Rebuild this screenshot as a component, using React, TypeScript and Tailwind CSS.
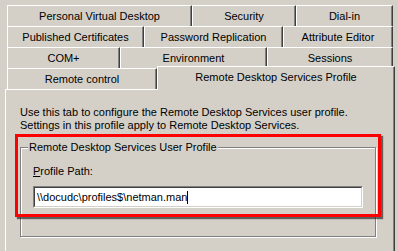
import React from "react";

type Tab = { label: string; w: string };

// tab strip rows, back to front
const TAB_ROWS: Tab[][] = [
  [
    { label: "Personal Virtual Desktop", w: "w-[185px]" },
    { label: "Security", w: "w-[104px]" },
    { label: "Dial-in", w: "w-[97px]" },
  ],
  [
    { label: "Published Certificates", w: "w-[137px]" },
    { label: "Password Replication", w: "w-[139px]" },
    { label: "Attribute Editor", w: "w-[110px]" },
  ],
  [
    { label: "COM+", w: "w-[113px]" },
    { label: "Environment", w: "w-[147px]" },
    { label: "Sessions", w: "w-[126px]" },
  ],
];

const font = "font-['Liberation_Sans',Arial,sans-serif] text-[11px] leading-[13px]";

function TabButton({ label, w }: Tab) {
  return (
    <div
      className={`${w} h-[21px] shrink-0 flex items-center justify-center border-t border-l border-r border-t-white border-l-white border-r-[#404040] shadow-[inset_-1px_0_0_#808080] text-black`}
    >
      {label}
    </div>
  );
}

function TabStrip() {
  return (
    <div className="ml-[2px] w-[386px] flex flex-col">
      {TAB_ROWS.map((row, i) => (
        <div key={i} className="flex h-[21px]">
          {row.map((t) => (
            <TabButton key={t.label} label={t.label} w={t.w} />
          ))}
        </div>
      ))}
      <div className="flex h-[21px]">
        <TabButton label="Remote control" w="w-[150px]" />
        <div className="relative z-10 -mt-[2px] -mr-[2px] w-[238px] h-[24px] shrink-0 flex items-start pt-[4px] justify-center bg-[#d4d0c8] border-t border-l border-r border-t-white border-l-white border-r-[#404040] shadow-[inset_-1px_0_0_#808080] text-black">
          Remote Desktop Services Profile
        </div>
      </div>
    </div>
  );
}

function GroupBox() {
  return (
    <div className="relative ml-[14px] mt-[15px] w-[356px] h-[90px] border border-[#808080] shadow-[inset_1px_1px_0_#fff,1px_1px_0_#fff]">
      <span className="absolute left-[7px] -top-[7px] px-[1px] bg-[#d4d0c8] text-black">
        Remote Desktop Services User Profile
      </span>
      <div className="pl-[12px] pt-[17px]">
        <div className="text-black">
          <span className="underline">P</span>rofile Path:
        </div>
        <div className="mt-[8px] w-[330px] h-[22px] border border-t-[#808080] border-l-[#808080] border-b-white border-r-white">
          <div className="h-full border border-t-[#404040] border-l-[#404040] border-b-[#d4d0c8] border-r-[#d4d0c8] bg-white flex items-center pl-[2px] text-black">
            <span>\\docudc\profiles$\netman.man</span>
            <span className="inline-block w-px h-[13px] bg-black" />
          </div>
        </div>
      </div>
    </div>
  );
}

export default function App() {
  return (
    <div className={`w-[398px] h-[251px] overflow-hidden bg-[#d4d0c8] pt-[5px] pl-[5px] ${font}`}>
      <TabStrip />
      <div className="relative w-[390px] h-[200px] border-t border-l border-r border-t-white border-l-white border-r-[#404040] shadow-[inset_-1px_0_0_#808080]">
        <div className="pl-[14px] pt-[16px] text-black">
          <p>Use this tab to configure the Remote Desktop Services user profile.</p>
          <p>Settings in this profile apply to Remote Desktop Services.</p>
        </div>
        <GroupBox />
        {/* red highlight drawn over the dialog */}
        <div className="absolute left-[9px] top-[44px] w-[366px] h-[83px] border-[3px] border-[#ff0000] shadow-[2px_2px_1px_rgba(0,0,0,0.55)]" />
      </div>
    </div>
  );
}
